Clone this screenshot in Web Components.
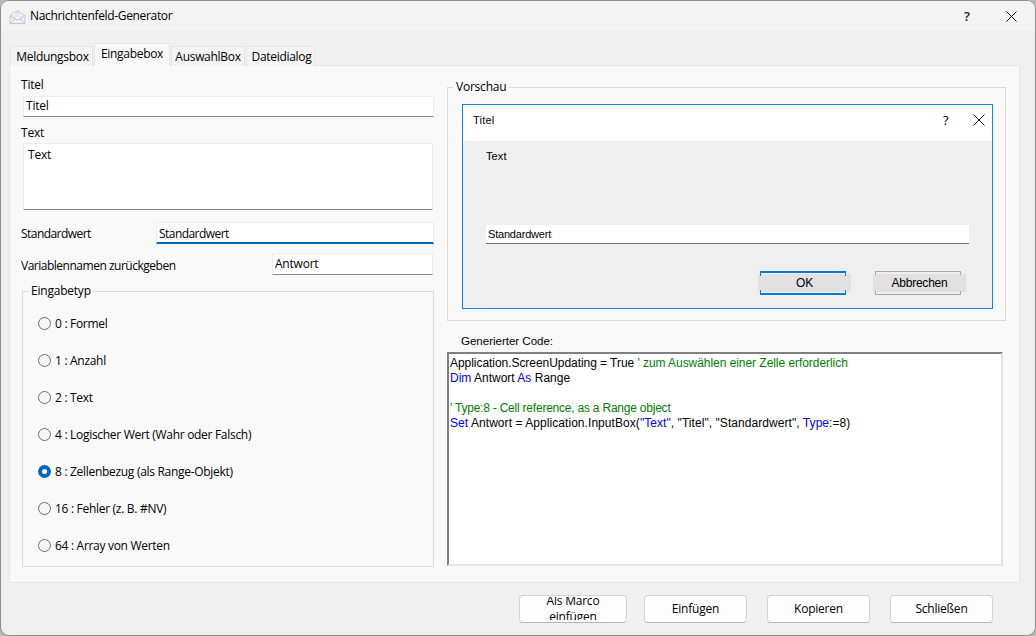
<!DOCTYPE html>
<html lang="de"><head><meta charset="utf-8"><title>Nachrichtenfeld-Generator</title>
<style>
html,body{margin:0;padding:0;width:1036px;height:636px;overflow:hidden;background:#b9b9b9;font:12px/16px "Open Sans","Noto Sans",sans-serif;color:#000}
</style></head><body>
<app-dialog>
  <title-bar slot="title">Nachrichtenfeld-Generator</title-bar>
  <tab-strip slot="tabs">
    <tab-item style="width:83px;padding-left:2px">Meldungsbox</tab-item><tab-item style="width:76px" active>Eingabebox</tab-item><tab-item style="width:74px">AuswahlBox</tab-item><tab-item style="width:69px;padding-left:2px">Dateidialog</tab-item>
  </tab-strip>
  <form-pane slot="left">
    <stack-field label="Titel" value="Titel"></stack-field>
    <stack-field label="Text" value="Text" multi></stack-field>
    <row-field label="Standardwert" value="Standardwert" focus w="278"></row-field>
    <row-field label="Variablennamen zurückgeben" value="Antwort" w="161" tight></row-field>
    <group-box label="Eingabetyp" class="types">
      <radio-item>0 : Formel</radio-item>
      <radio-item>1 : Anzahl</radio-item>
      <radio-item>2 : Text</radio-item>
      <radio-item>4 : Logischer Wert (Wahr oder Falsch)</radio-item>
      <radio-item checked>8 : Zellenbezug (als Range-Objekt)</radio-item>
      <radio-item>16 : Fehler (z. B. #NV)</radio-item>
      <radio-item>64 : Array von Werten</radio-item>
    </group-box>
  </form-pane>
  <side-pane slot="right">
    <group-box label="Vorschau" slot="preview" preview>
      <preview-window></preview-window>
    </group-box>
    <code-view slot="code"></code-view>
  </side-pane>
  <action-button slot="actions" wide><span>Als Marco<br>einfügen</span></action-button>
  <action-button slot="actions">Einfügen</action-button>
  <action-button slot="actions">Kopieren</action-button>
  <action-button slot="actions">Schließen</action-button>
</app-dialog>
<script>
const def=(name,html)=>customElements.define(name,class extends HTMLElement{
  connectedCallback(){ if(this.shadowRoot) return;
    const r=this.attachShadow({mode:'open'});
    r.innerHTML=typeof html==='function'?html(this):html;
  }
});
def('app-dialog',`<style>
:host{display:flex;flex-direction:column;box-sizing:border-box;width:1034px;height:634px;margin:1px 1px 0;background:#f0f0f0;border-radius:8px;overflow:hidden;box-shadow:0 0 0 1px #8d8d8d}
.panel{box-sizing:border-box;margin:0 15px 0 8px;height:518px;background:#f9f9f9;border:1px solid #e5e5e5;display:grid;grid-template-columns:412px 559px;column-gap:14px;padding:10px 0 0 11px}
.actions{display:flex;gap:20px;padding:12px 42px 0 0;justify-content:flex-end}
</style><slot name="title"></slot><slot name="tabs"></slot>
<div class="panel"><slot name="left"></slot><slot name="right"></slot></div>
<div class="actions"><slot name="actions"></slot></div>`);
def('title-bar',`<style>
:host{display:flex;align-items:center;height:30px;background:#f3f3f3;flex:none;font-size:12px;color:#000}
svg{margin:0 4px 0 8px;flex:none}
.t{flex:1;letter-spacing:-.34px}
.b{width:45px;display:flex;justify-content:center;align-items:center}
.q{font:600 13px "Open Sans";width:44px;text-align:center;color:#222}
</style>
<svg width="17" height="17" viewBox="0 0 17 17"><path d="M1 7.5 8.5 2.5 16 7.5V15.5H1Z" fill="#eef1f5" stroke="#c4c9d0"/><path d="M3.5 9V4.5H10.5L13.5 6.5V9L8.5 12Z" fill="#fff" stroke="#d0d4da" stroke-width=".8"/><path d="M5 6H11M5 8H12" stroke="#c6ccd4" stroke-width=".8"/><path d="M1 7.5 8.5 12 16 7.5M1 15.5 6.5 10.5M16 15.5 10.5 10.5" fill="none" stroke="#b9bfc8" stroke-width=".8"/></svg>
<span class="t"><slot></slot></span><span class="q">?</span>
<span class="b" style="margin-right:1px"><svg style="margin:0" width="11" height="11" viewBox="0 0 11 11"><path d="M.5.5 10.5 10.5M10.5.5.5 10.5" stroke="#111" fill="none"/></svg></span>`);
def('tab-strip',`<style>:host{display:flex;align-items:flex-end;height:35px;padding-left:9px;margin-bottom:-1px;position:relative;z-index:1}</style><slot></slot>`);
def('tab-item',`<style>
:host{display:flex;align-items:center;justify-content:center;box-sizing:border-box;height:20px;margin-right:1px;background:#f3f3f3;border:1px solid #e5e5e5;border-bottom:0;letter-spacing:-.3px;white-space:nowrap}
:host([active]){height:23px;background:#f9f9f9;padding:0 0 3px}
</style><slot></slot>`);
def('form-pane',`<style>:host{display:flex;flex-direction:column;padding-top:1px}</style><slot></slot>`);
def('stack-field',h=>{const m=h.hasAttribute('multi');return `<style>
:host{display:block;letter-spacing:-.22px}
.l{height:16px}
.i{box-sizing:border-box;margin:${m?2:3}px 0 0 2px;width:${m?410:411}px;height:${m?67:21}px;background:#fff;border:1px solid #ececec;border-bottom:1px solid #8a8a8a;padding:${m?'3px 4px':'1px 2px'}}
:host([multi]){margin-top:8px}
</style><div class="l">${h.getAttribute('label')}</div><div class="i">${h.getAttribute('value')}</div>`});
def('row-field',h=>{const t=h.hasAttribute('tight'),f=h.hasAttribute('focus');return `<style>
:host{display:flex;justify-content:space-between;align-items:center;margin-top:${t?9:12}px;width:413px}
.i{box-sizing:border-box;width:${h.getAttribute('w')}px;height:22px;background:#fff;border:1px solid #ececec;border-bottom:${f?'2px solid #0067c0':'1px solid #8a8a8a'};padding:${f?2:1}px 2px 0;margin-right:${f?0:1}px;line-height:18px;letter-spacing:${f?'-.55px':'-.22px'}}
.l{padding-top:${t?4:2}px;letter-spacing:${t?'-.49px':'-.55px'}}
</style><span class="l">${h.getAttribute('label')}</span><div class="i">${h.getAttribute('value')}</div>`});
def('group-box',h=>{const p=h.hasAttribute('preview');return `<style>
:host{display:block;letter-spacing:-.22px}
:host(.types){margin:8px 0 0 1px;width:412px}
fieldset{box-sizing:border-box;margin:0;min-width:0;border:1px solid #dcdcdc;${p?'padding:9px 12px 11px 14px;':'padding:6px 0 0 15px;height:284px;'}}
legend{padding:0 3px;margin-left:${p?-9:-10}px;height:16px;line-height:16px}
</style><fieldset><legend>${h.getAttribute('label')}</legend><slot></slot></fieldset>`});
def('radio-item',`<style>
:host{display:flex;align-items:center;gap:4px;height:37px;letter-spacing:-.3px}
i{box-sizing:border-box;width:13px;height:13px;border-radius:50%;border:1px solid #6e6e6e;background:#f6f6f6;flex:none}
:host([checked]) i{border:4px solid #0067c0;background:#fff}
</style><i></i><span><slot></slot></span>`);
def('side-pane',`<style>:host{display:flex;flex-direction:column;padding-top:3px;width:559px}
.c{margin-top:12px}</style><slot name="preview"></slot><div class="c"><slot name="code"></slot></div>`);
def('preview-window',`<style>
:host{display:block;box-sizing:border-box;width:531px;height:205px;border:1px solid #0f86e0;background:#efefef;font:11px/16px "Liberation Sans",sans-serif}
.h{box-sizing:border-box;height:36px;background:#fff;display:flex;align-items:center;padding:0 7px 6px 10px}
.h b{flex:1;font-weight:400;letter-spacing:.2px}
.q{width:30px;text-align:left;font:400 13px "Open Sans"}
.x{display:flex}
.b{padding:7px 23px 0}
.tx{letter-spacing:.1px}
.in{box-sizing:border-box;margin-top:61px;width:483px;height:19px;background:#fff;border-bottom:1px solid #7a7a7a;padding:0 1px 0 2px;line-height:18px;letter-spacing:-.2px}
.r{display:flex;justify-content:flex-end;gap:22px;margin-top:30px;padding-right:3px;font-size:12px}
.k{--c:#a9a9a9;position:relative;box-sizing:border-box;height:18px;width:93px;display:flex;align-items:center;justify-content:center;background:#e1e1e1}
.k::before{content:"";position:absolute;left:2px;right:5px;top:-3px;bottom:-3px;box-sizing:border-box;border:solid var(--c);border-width:1px 0;
 background:linear-gradient(var(--c),var(--c)) left top/1px 3px no-repeat,linear-gradient(var(--c),var(--c)) right top/1px 3px no-repeat,linear-gradient(var(--c),var(--c)) left bottom/1px 3px no-repeat,linear-gradient(var(--c),var(--c)) right bottom/1px 3px no-repeat}
.ok{--c:#0a78d7}
.ok::before{border-width:2px 0}
</style><div class="h"><b>Titel</b><span class="q">?</span><svg class="x" width="12" height="12" viewBox="0 0 12 12"><path d="M.5.5 11.5 11.5M11.5.5.5 11.5" stroke="#111" fill="none"/></svg></div>
<div class="b"><div class="tx">Text</div><div class="in">Standardwert</div>
<div class="r"><div class="k ok">OK</div><div class="k ab">Abbrechen</div></div></div>`);
def('code-view',`<style>
:host{display:block;font:12px/15px "Liberation Sans",sans-serif}
.l{padding-left:14px;height:16px;line-height:16px;font-size:11.5px;margin-bottom:3px}
.c{box-sizing:border-box;width:556px;height:214px;background:#fff;border:2px solid;border-color:#808080 #e3e3e3 #e3e3e3 #808080;padding:2px 0 0 1px;white-space:pre}
.b{color:#00f}.g{color:#008000}
.a{letter-spacing:-.05px}.d{letter-spacing:-.22px}.e{letter-spacing:.06px}
</style><div class="l">Generierter Code:</div><div class="c"><span class="a">Application.ScreenUpdating = True <span class="g">' zum Auswählen einer Zelle erforderlich</span></span>
<span class="b">Dim</span> Antwort <span class="b">As</span> Range

<span class="g d">' Type:8 - Cell reference, as a Range object</span>
<span class="e"><span class="b">Set</span> Antwort = Application.InputBox(<span class="b">"Text"</span>, "Titel", "Standardwert", <span class="b">Type</span>:=8)</span></div>`);
def('action-button',`<style>
:host{display:flex;box-sizing:border-box;width:103px;height:28px;background:#fdfdfd;border:1px solid #d2d2d2;border-bottom-color:#b5b5b5;border-radius:4px;letter-spacing:-.22px;text-align:center;padding:1px 0 2px}
:host([wide]){width:108px;margin-right:-3px}
.c{flex:1;min-width:0;display:flex;align-items:center;justify-content:center;overflow:hidden}
</style><div class="c"><slot></slot></div>`);
</script>
</body></html>
